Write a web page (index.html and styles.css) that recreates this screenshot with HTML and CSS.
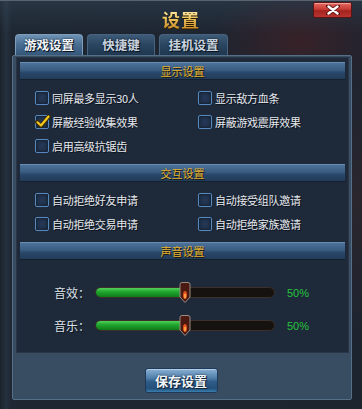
FILE: index.html
```html
<!DOCTYPE html>
<html lang="zh-CN">
<head>
<meta charset="utf-8">
<title>设置</title>
<link rel="stylesheet" href="styles.css">
</head>
<body>
<div class="dialog">
  <div class="titlebar">
    <h1 class="title">设置</h1>
    <button class="close" type="button" aria-label="关闭">
      <svg width="14" height="10" viewBox="0 0 14 10"><path d="M2 1 L12 9 M12 1 L2 9" stroke="#5a1010" stroke-width="4" stroke-linecap="round"/><path d="M2.5 1.5 L11.5 8.5 M11.5 1.5 L2.5 8.5" stroke="#fff" stroke-width="2.4" stroke-linecap="round"/></svg>
    </button>
  </div>
  <div class="tabs">
    <div class="tab active">游戏设置</div>
    <div class="tab">快捷键</div>
    <div class="tab">挂机设置</div>
  </div>
  <div class="frame">
    <div class="inner">
      <div class="sec-head">显示设置</div>
      <div class="opts">
        <label class="opt"><span class="box"></span>同屏最多显示30人</label>
        <label class="opt"><span class="box"></span>显示敌方血条</label>
        <label class="opt"><span class="box checked"><svg width="16" height="14" viewBox="0 0 16 14"><path d="M2 7 L6 11 L14 1" fill="none" stroke="#3a2a00" stroke-width="4" stroke-linecap="round" stroke-linejoin="round"/><path d="M2.5 7.3 L6 10.5 L13.5 1.5" fill="none" stroke="#f5c820" stroke-width="2.2" stroke-linecap="round" stroke-linejoin="round"/></svg></span>屏蔽经验收集效果</label>
        <label class="opt"><span class="box"></span>屏蔽游戏震屏效果</label>
        <label class="opt"><span class="box"></span>启用高级抗锯齿</label>
      </div>
      <div class="sec-head">交互设置</div>
      <div class="opts">
        <label class="opt"><span class="box"></span>自动拒绝好友申请</label>
        <label class="opt"><span class="box"></span>自动接受组队邀请</label>
        <label class="opt"><span class="box"></span>自动拒绝交易申请</label>
        <label class="opt"><span class="box"></span>自动拒绝家族邀请</label>
      </div>
      <div class="sec-head">声音设置</div>
      <div class="sounds">
        <div class="sound">
          <span class="s-label">音效：</span>
          <div class="track"><div class="fill" style="width:50%"></div><span class="thumb" style="left:50%"><svg width="12" height="21" viewBox="0 0 12 21"><path d="M1 2.5 Q1 0.5 3 0.5 L9 0.5 Q11 0.5 11 2.5 L11 15 L6 20.5 L1 15 Z" fill="#4a1a12" stroke="#9a8c82" stroke-width="1"/><ellipse cx="6" cy="13" rx="2" ry="4" fill="#e0501a"/><ellipse cx="6" cy="14" rx="1.2" ry="2.4" fill="#ffa040"/></svg></span></div>
          <span class="pct">50%</span>
        </div>
        <div class="sound">
          <span class="s-label">音乐：</span>
          <div class="track"><div class="fill" style="width:50%"></div><span class="thumb" style="left:50%"><svg width="12" height="21" viewBox="0 0 12 21"><path d="M1 2.5 Q1 0.5 3 0.5 L9 0.5 Q11 0.5 11 2.5 L11 15 L6 20.5 L1 15 Z" fill="#4a1a12" stroke="#9a8c82" stroke-width="1"/><ellipse cx="6" cy="13" rx="2" ry="4" fill="#e0501a"/><ellipse cx="6" cy="14" rx="1.2" ry="2.4" fill="#ffa040"/></svg></span></div>
          <span class="pct">50%</span>
        </div>
      </div>
    </div>
    <div class="footer">
      <button class="save" type="button">保存设置</button>
    </div>
  </div>
</div>
</body>
</html>
```
FILE: styles.css
```css
* { box-sizing: border-box; }
html, body { margin: 0; padding: 0; }
body {
  width: 362px;
  height: 409px;
  overflow: hidden;
  background: #151b24;
  font-family: "Noto Sans CJK SC", "Noto Sans", sans-serif;
}
.dialog {
  width: 362px;
  height: 409px;
  position: relative;
  background:
    radial-gradient(ellipse 90px 60px at 300px 40px, rgba(90,30,30,0.45), rgba(90,30,30,0) 100%),
    radial-gradient(ellipse 120px 140px at 350px 200px, rgba(70,40,40,0.35), rgba(0,0,0,0) 100%),
    linear-gradient(90deg, #1a222c 0px, #26313e 6px, #1d2631 12px, #1c2430 100%);
  border-top: 1px solid #5a6470;
  display: flex;
  flex-direction: column;
}
.titlebar {
  height: 33px;
  display: flex;
  align-items: center;
  justify-content: center;
  background: linear-gradient(180deg, rgba(60,80,100,0.35), rgba(30,42,56,0));
}
.title {
  margin: 2px 0 0 0;
  font-size: 18px;
  font-weight: bold;
  line-height: 20px;
  letter-spacing: 1px;
  color: #e8c060;
  background: linear-gradient(180deg, #fff2c0 0%, #f0c860 45%, #c88a28 100%);
  -webkit-background-clip: text;
  background-clip: text;
  -webkit-text-fill-color: transparent;
  filter: drop-shadow(0 1px 0 #2a1a00);
}
.close {
  position: absolute;
  top: 1px;
  right: 10px;
  width: 39px;
  height: 16px;
  padding: 0;
  border: 1px solid #5a1414;
  border-radius: 2px;
  background: linear-gradient(180deg, #e26a62 0%, #c73a34 45%, #a52420 55%, #b83430 100%);
  box-shadow: inset 0 1px 0 rgba(255,200,190,0.6);
  display: flex;
  align-items: center;
  justify-content: center;
}
.tabs {
  display: flex;
  gap: 4px;
  padding-left: 15px;
  height: 21px;
  align-items: flex-end;
}
.tab {
  width: 68px;
  height: 21px;
  border: 1px solid #47637f;
  border-bottom: none;
  border-radius: 4px 4px 0 0;
  background: linear-gradient(180deg, #3d5b78 0%, #2a4560 50%, #1f3850 100%);
  color: #c9d3de;
  font-size: 12.5px;
  font-weight: bold;
  line-height: 20px;
  text-align: center;
  text-shadow: 0 0 2px #0a1420, 1px 1px 0 #0a1420;
}
.tab:nth-child(3) { width: 69px; }
.tab.active {
  border-color: #7d9dbc;
  background: linear-gradient(180deg, #6f93b5 0%, #4a6f93 45%, #34577a 100%);
  color: #f4f6fa;
}
.frame {
  margin: 0 10px 0 12px;
  height: 345px;
  border: 1px solid #566f88;
  border-radius: 2px;
  background: #384c62;
  padding: 1px 2px 0 3px;
  display: flex;
  flex-direction: column;
}
.inner {
  height: 296px;
  background: #1e293a;
  border: 1px solid #2a3648;
  padding: 4px 3px 0 3px;
}
.sec-head {
  height: 18px;
  border-top: 1px solid #6a8cb0;
  border-bottom: 1px solid #13202e;
  background: linear-gradient(180deg, #4c729a 0%, #3a5c80 45%, #28476a 60%, #223c58 100%);
  color: #e4b230;
  font-size: 11px;
  line-height: 16px;
  text-align: center;
  text-shadow: 1px 1px 0 #1a1408;
  margin-bottom: 6px;
}
.opts {
  display: grid;
  grid-template-columns: 163px 1fr;
  grid-auto-rows: 24px;
  padding-left: 15px;
  margin-bottom: 6px;
}
.opt {
  display: flex;
  align-items: center;
  gap: 3px;
  color: #e6e9ee;
  font-size: 11px;
  letter-spacing: -0.3px;
  text-shadow: 1px 1px 0 #0c121a;
}
.box {
  width: 14px;
  height: 14px;
  flex: none;
  position: relative;
  border: 1px solid #5688bc;
  border-radius: 2px;
  background: radial-gradient(circle at 50% 50%, #26395a 0%, #1a283b 100%);
  box-shadow: inset 0 0 2px #0a1422, 0 0 1px #2a4a70;
}
.box svg {
  position: absolute;
  left: -1px;
  top: -1px;
}
.sounds {
  padding: 10px 0 0 34px;
}
.sound {
  display: flex;
  align-items: center;
  height: 33px;
}
.s-label {
  width: 36px;
  color: #dde1e6;
  font-size: 12px;
  text-shadow: 1px 1px 0 #0c121a;
  margin-right: 5px;
}
.track {
  position: relative;
  width: 180px;
  height: 11px;
  border: 1px solid #3b302a;
  border-radius: 6px;
  background: #16120f;
}
.fill {
  height: 100%;
  border-radius: 5px 0 0 5px;
  background: linear-gradient(180deg, #52d05a 0%, #22a830 40%, #0f7a1a 100%);
}
.thumb {
  position: absolute;
  top: -6px;
  width: 12px;
  height: 21px;
  margin-left: -6px;
  display: block;
}
.thumb svg { display: block; }
.pct {
  margin-left: 12px;
  color: #25c43a;
  font-family: "Liberation Sans", Arial, sans-serif;
  font-size: 11px;
}
.footer {
  display: flex;
  justify-content: center;
  padding-top: 15px;
  padding-right: 3px;
}
.save {
  width: 73px;
  height: 25px;
  padding: 0;
  border: 1px solid #1e3a58;
  border-radius: 3px;
  background: linear-gradient(180deg, #8ab0d4 0%, #4f7ea8 40%, #2e5c88 55%, #24507a 85%, #3a80b0 100%);
  box-shadow: inset 0 1px 0 #b0cce6;
  color: #f2f5f8;
  font-family: "Noto Sans CJK SC", sans-serif;
  font-size: 13px;
  font-weight: bold;
  line-height: 23px;
  text-shadow: 1px 1px 0 #10243a, 0 0 2px #10243a;
}
```
